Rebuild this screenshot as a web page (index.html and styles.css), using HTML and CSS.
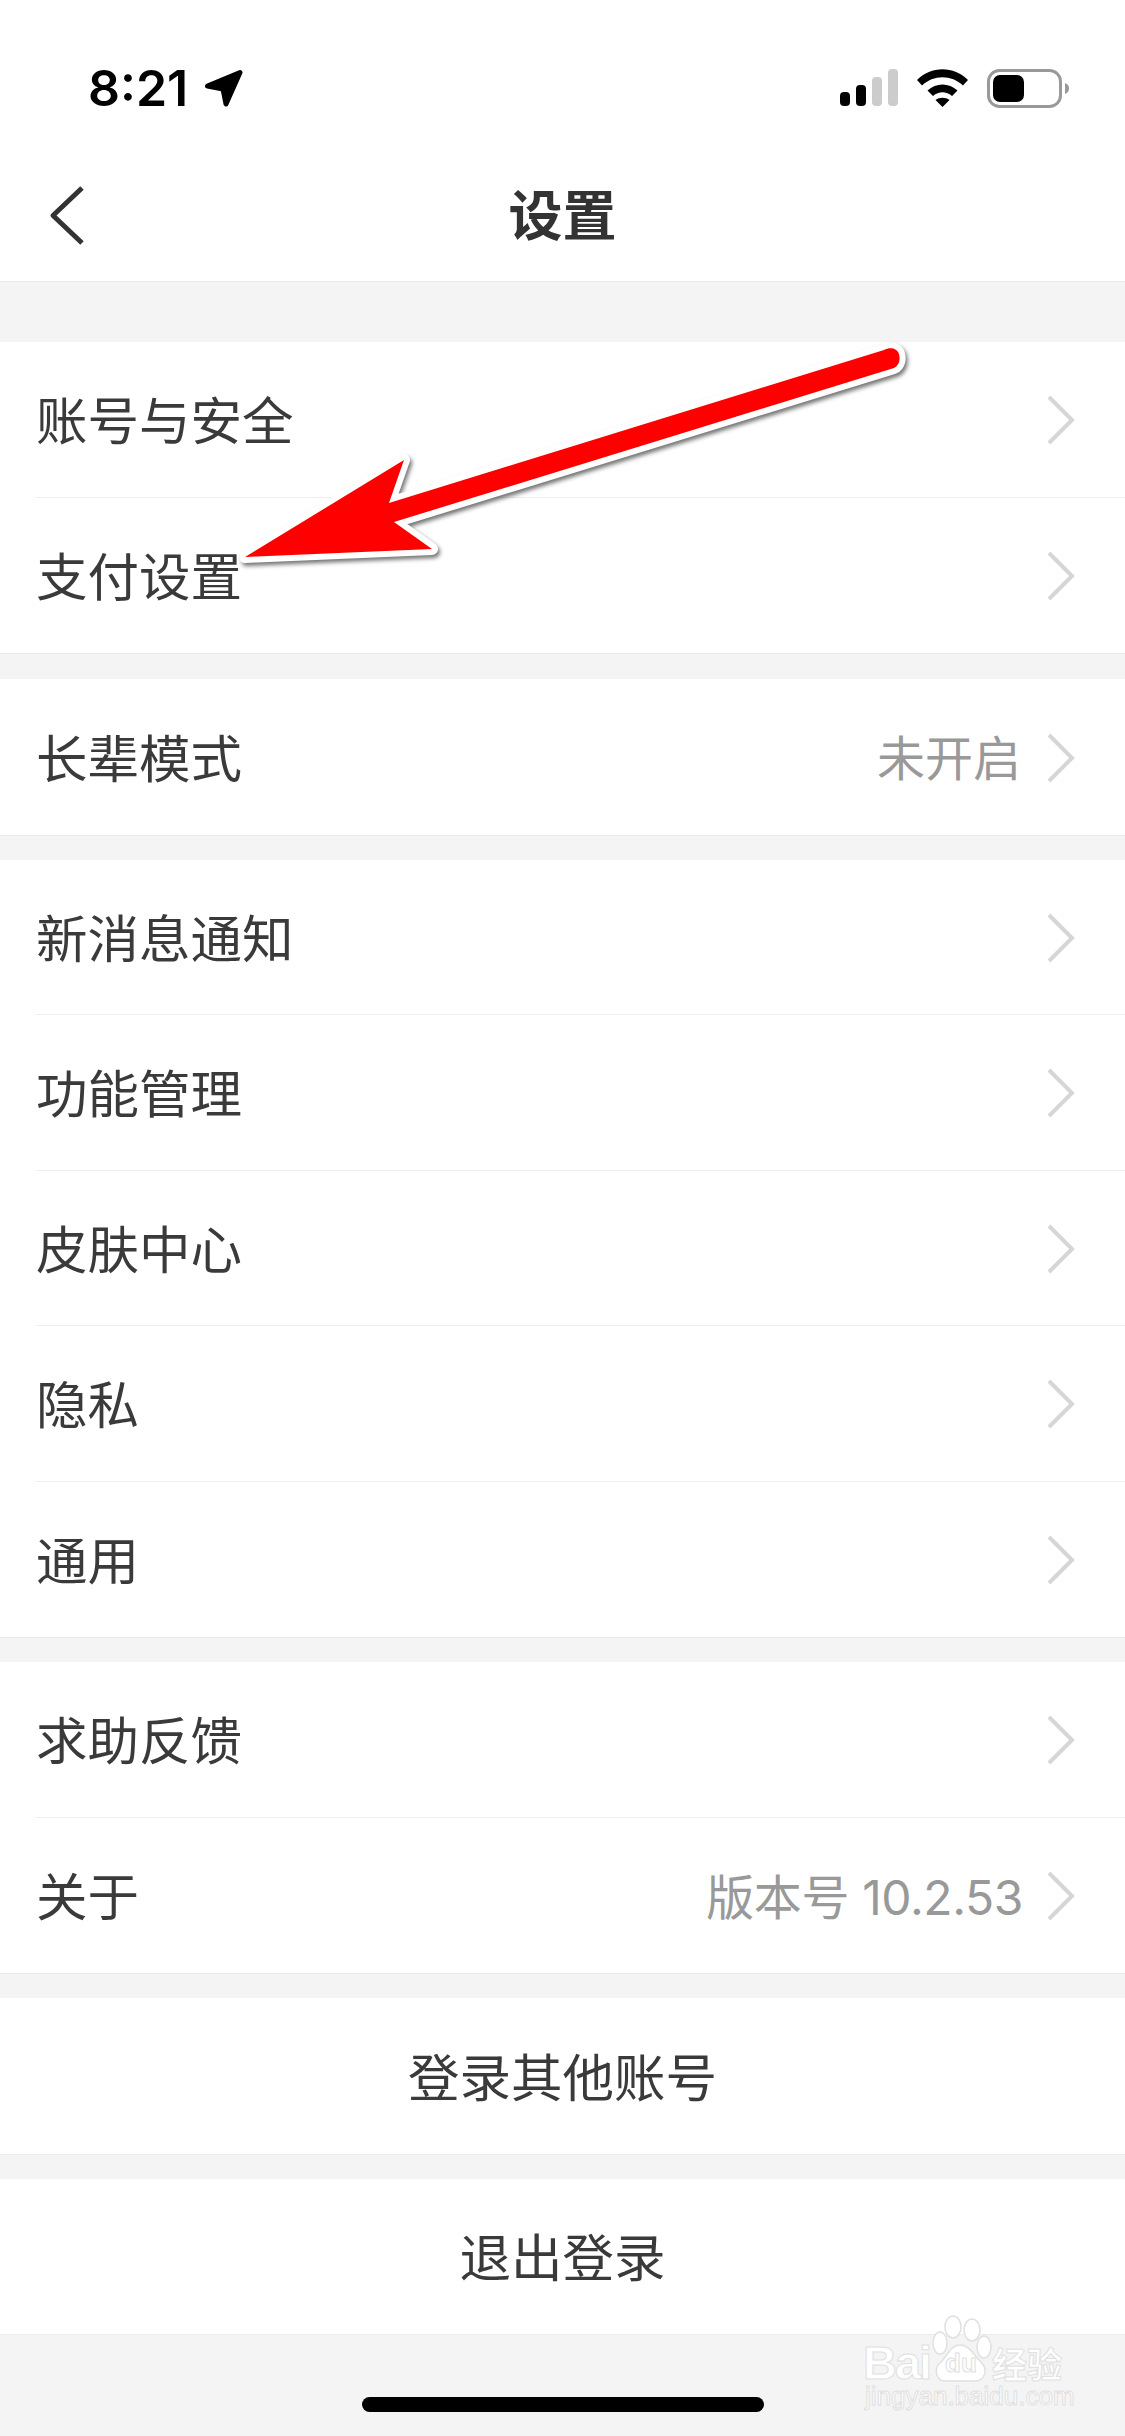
FILE: index.html
```html
<!DOCTYPE html>
<html lang="zh-CN">
<head>
    <meta charset="UTF-8">
    <meta name="viewport" content="width=device-width, initial-scale=1.0">
    <title>设置</title>
    <link rel="stylesheet" href="styles.css">
</head>
<body>
    <div class="screen">
        <div class="status">
            <div class="status-left">
                <span class="time">8:21</span>
                <svg class="loc" width="40" height="38" viewBox="0 0 40 38"><path d="M3.500 17 36 3.500 22 35 19 20Z"/></svg>
            </div>
            <div class="status-right">
                <svg width="58" height="38" viewBox="0 0 58 38">
                    <rect class="on" x="0" y="23" width="10" height="14" rx="4"/>
                    <rect class="on" x="16" y="16" width="10" height="21" rx="4"/>
                    <rect class="off" x="32" y="8" width="10" height="29" rx="4"/>
                    <rect class="off" x="48" y="0" width="10" height="37" rx="4"/>
                </svg>
                <svg width="51" height="38" viewBox="0 0 51 38">
                    <path d="M0 11C14-3.500 37-3.500 51 11L46 16.500C34.500 5.500 16.500 5.500 5 16.500Z"/>
                    <path d="M10.500 21.500C19 13.500 32 13.500 40.500 21.500L35 27C29 22 22 22 16 27Z"/>
                    <path d="M18.500 31C22.500 28 28.500 28 32.500 31L25.500 38Z"/>
                </svg>
                <svg width="83" height="40" viewBox="0 0 83 40">
                    <rect class="batt" x="1.500" y="1.500" width="72" height="36" rx="11"/>
                    <rect class="on" x="6" y="6" width="31" height="27" rx="7"/>
                    <path class="nub" d="M78 14C81 15 82 17 82 19.500 82 22 81 24 78 25Z"/>
                </svg>
            </div>
        </div>

        <div class="header">
            <svg class="back" width="38" height="60" viewBox="0 0 38 60"><path d="M33 2 4 29.500 33 57"/></svg>
            <h1 class="title">设置</h1>
        </div>

        <div class="list">
            <div class="group group-first">
                <div class="row"><span class="label">账号与安全</span><svg class="chev" width="28" height="50" viewBox="0 0 28 50"><path d="M2 2 25 25 2 48"/></svg></div>
                <div class="row"><span class="label">支付设置</span><svg class="chev" width="28" height="50" viewBox="0 0 28 50"><path d="M2 2 25 25 2 48"/></svg></div>
            </div>
            <div class="group">
                <div class="row"><span class="label">长辈模式</span><span class="value">未开启</span><svg class="chev" width="28" height="50" viewBox="0 0 28 50"><path d="M2 2 25 25 2 48"/></svg></div>
            </div>
            <div class="group">
                <div class="row"><span class="label">新消息通知</span><svg class="chev" width="28" height="50" viewBox="0 0 28 50"><path d="M2 2 25 25 2 48"/></svg></div>
                <div class="row"><span class="label">功能管理</span><svg class="chev" width="28" height="50" viewBox="0 0 28 50"><path d="M2 2 25 25 2 48"/></svg></div>
                <div class="row"><span class="label">皮肤中心</span><svg class="chev" width="28" height="50" viewBox="0 0 28 50"><path d="M2 2 25 25 2 48"/></svg></div>
                <div class="row"><span class="label">隐私</span><svg class="chev" width="28" height="50" viewBox="0 0 28 50"><path d="M2 2 25 25 2 48"/></svg></div>
                <div class="row"><span class="label">通用</span><svg class="chev" width="28" height="50" viewBox="0 0 28 50"><path d="M2 2 25 25 2 48"/></svg></div>
            </div>
            <div class="group">
                <div class="row"><span class="label">求助反馈</span><svg class="chev" width="28" height="50" viewBox="0 0 28 50"><path d="M2 2 25 25 2 48"/></svg></div>
                <div class="row"><span class="label">关于</span><span class="value value-version">版本号 10.2.53</span><svg class="chev" width="28" height="50" viewBox="0 0 28 50"><path d="M2 2 25 25 2 48"/></svg></div>
            </div>
            <div class="group">
                <div class="row row-center">登录其他账号</div>
            </div>
            <div class="group">
                <div class="row row-center">退出登录</div>
            </div>
        </div>

        <div class="home-bar"></div>

        <!-- red arrow drawn on top of the screenshot -->
        <svg class="arrow" width="700" height="360" viewBox="0 0 700 360">
            <path d="M644 15C650 12 657 13 659 19 661 26 658 31 654 33L154 187 192 214 5 222 164 125 149 168Z"/>
        </svg>

        <svg class="mark" width="230" height="110" viewBox="0 0 230 110">
            <ellipse cx="103" cy="14" rx="8" ry="11"/>
            <ellipse cx="122" cy="17" rx="8" ry="11"/>
            <ellipse cx="90" cy="30" rx="7" ry="11"/>
            <ellipse cx="134" cy="34" rx="7" ry="11"/>
            <path d="M110 32C100 32 97 44 90 50 84 55 85 68 96 68 103 68 118 68 124 68 136 68 138 56 131 49 124 43 120 32 110 32Z"/>
            <text class="mark-big" x="13" y="66">Bai</text>
            <text class="mark-du" x="95" y="59">du</text>
            <text class="mark-cn" x="142" y="65">经验</text>
            <text class="mark-url" x="15" y="92">jingyan.baidu.com</text>
        </svg>
    </div>
</body>
</html>
```

FILE: styles.css
```css
*{
    box-sizing: border-box;
}
body{
    margin: 0;
    background-color: #f4f4f4;
    font-family: "Liberation Sans", "Noto Sans CJK SC", sans-serif;
}
.screen{
    position: relative;
    width: 1125px;
    height: 2436px;
    overflow: hidden;
    background-color: #f4f4f4;
}

/* status bar */
.status{
    display: flex;
    justify-content: space-between;
    align-items: flex-start;
    height: 150px;
    padding: 69px 55px 0 88px;
    background-color: #fff;
}
.status-left{
    display: flex;
    align-items: center;
    gap: 16px;
    height: 38px;
}
.time{
    font-family: Inter, "Liberation Sans", sans-serif;
    font-size: 50px;
    font-weight: 600;
    line-height: 38px;
    color: #000;
}
.loc path{
    fill: #000;
    stroke: #000;
    stroke-width: 5;
    stroke-linejoin: round;
}
.status-right{
    display: flex;
    gap: 19px;
}
.status-right svg{
    fill: #000;
}
.on{
    fill: #000;
}
.off{
    fill: #ccc;
}
.batt{
    fill: none;
    stroke: #999;
    stroke-width: 3;
}
.nub{
    fill: #999;
}

/* header */
.header{
    position: relative;
    display: flex;
    align-items: center;
    justify-content: center;
    height: 132px;
    background-color: #fff;
    border-bottom: 1px solid #ebebeb;
}
.back{
    position: absolute;
    left: 49px;
    top: 36px;
    fill: none;
    stroke: #333;
    stroke-width: 5;
    stroke-linejoin: round;
}
.title{
    margin: 0 0 6px 0;
    font-family: "Noto Sans CJK SC", sans-serif;
    font-size: 54px;
    font-weight: 700;
    line-height: 1;
    color: #333;
}

/* settings rows */
.list{
    display: flex;
    flex-direction: column;
    gap: 24px;
    padding-top: 60px;
}
.group{
    background-color: #fff;
    border-bottom: 1px solid #ebebeb;
}
.group-first{
    margin-bottom: 1px;
}
.row{
    display: flex;
    align-items: center;
    height: 155.5px;
    margin-left: 36px;
    padding-right: 50px;
    border-bottom: 1px solid #eee;
    font-family: "Noto Sans CJK SC", sans-serif;
    font-size: 51.5px;
    font-weight: 400;
    color: #3a3a3a;
}
.row:last-child{
    border-bottom: 0;
}
.label{
    flex: 1;
    margin-bottom: 3px;
}
.value{
    margin: 0 26px 3px 0;
    font-family: Inter, "Noto Sans CJK SC", sans-serif;
    font-size: 48px;
    color: #999;
}
.value-version{
    margin-right: 24px;
    letter-spacing: -0.4px;
}
.chev{
    margin-top: 2px;
    fill: none;
    stroke: #d6d6d6;
    stroke-width: 4;
    stroke-linejoin: miter;
}
.row-center{
    justify-content: center;
    margin-left: 0;
    padding: 0 0 3px 0;
}

.home-bar{
    position: absolute;
    left: 362px;
    top: 2397px;
    width: 402px;
    height: 15px;
    border-radius: 8px;
    background-color: #000;
}

/* overlays */
.arrow{
    position: absolute;
    left: 240px;
    top: 335px;
    filter: drop-shadow(2px 3px 2px rgba(0, 0, 0, 0.55));
}
.arrow path{
    fill: #f00;
    stroke: #fff;
    stroke-width: 12;
    stroke-linejoin: round;
    paint-order: stroke;
}
.mark{
    position: absolute;
    left: 850px;
    top: 2313px;
}
.mark ellipse, .mark path{
    fill: #fff;
    stroke: #e0e0e0;
    stroke-width: 1.5;
}
.mark text{
    fill: #fff;
    stroke: #e0e0e0;
    stroke-width: 1;
}
.mark-big{
    font-size: 47px;
    font-weight: 700;
    letter-spacing: -2px;
}
.mark-du{
    font-size: 26px;
    font-weight: 700;
}
.mark-cn{
    font-family: "Noto Sans CJK SC", sans-serif;
    font-size: 35px;
    font-weight: 700;
}
.mark-url{
    font-size: 26px;
}
```
